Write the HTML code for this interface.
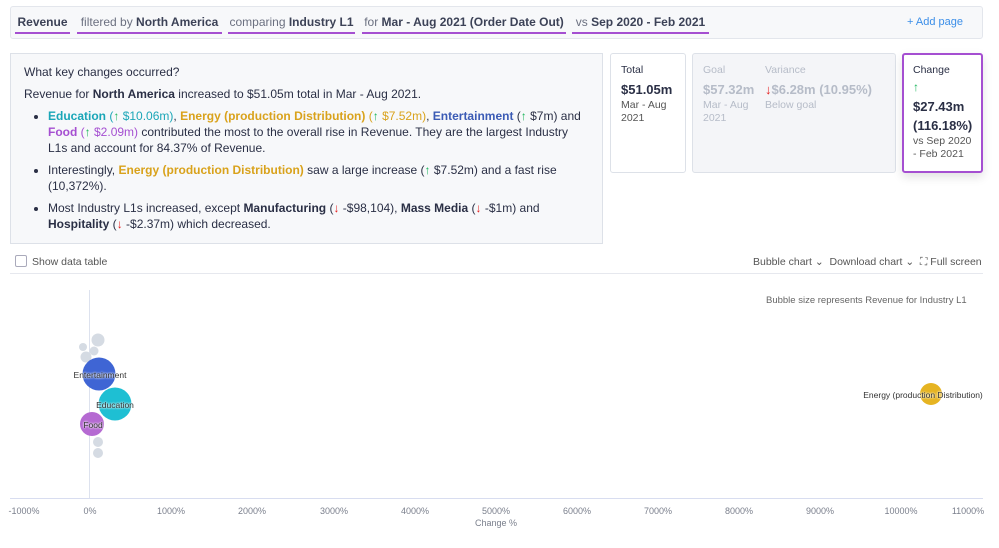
<!DOCTYPE html><html><head><style>
body{margin:0;width:999px;height:548px;background:#fff;font-family:"Liberation Sans",sans-serif;color:#2a2f45;position:relative;overflow:hidden}
.a{position:absolute}
.tb{left:10px;top:6px;width:973px;height:33px;border:1px solid #e3e6ec;background:#f7f8fa;border-radius:3px;box-sizing:border-box}
.tab{top:15px;height:17px;font-size:12px;color:#6b7080;border-bottom:2px solid #a54fd1;white-space:nowrap;text-align:center;overflow:hidden}
.tab b{color:#3c4257}
.ins{left:10px;top:53px;width:593px;height:191px;border:1px solid #dde1e8;background:#f7f8fa;box-sizing:border-box;font-size:12px;line-height:16px}
.ins ul{margin:0;padding-left:24px;padding-right:20px}.ins li{margin-bottom:6px}
.card{border:1px solid #dde1e8;border-radius:3px;box-sizing:border-box;font-size:10.5px;line-height:13px;padding:10px}
.up{color:#1bb55c;font-weight:bold}.dn{color:#e52020;font-weight:bold}
.t{color:#1aa6b7}.o{color:#d9a21b}.bl{color:#3b5bb5}.p{color:#a54fd1}
.tick{top:506px;font-size:9px;color:#7a7f8c;transform:translateX(-50%)}
.bub{border-radius:50%;transform:translate(-50%,-50%)}
.lb{font-size:8.5px;color:#333;transform:translate(-50%,-50%);text-shadow:0 0 2px #fff,0 0 2px #fff}
</style></head><body>
<div class="a tb"></div>
<div class="a tab" style="left:15px;width:55px"><b>Revenue</b></div>
<div class="a tab" style="left:77px;width:145px">filtered by <b>North America</b></div>
<div class="a tab" style="left:228px;width:127px">comparing <b>Industry L1</b></div>
<div class="a tab" style="left:362px;width:204px">for <b>Mar - Aug 2021 (Order Date Out)</b></div>
<div class="a tab" style="left:572px;width:137px">vs <b>Sep 2020 - Feb 2021</b></div>
<div class="a" style="left:907px;top:16px;font-size:11px;color:#3b8ee8">+ Add page</div>
<div class="a ins"><div style="padding:10px 0 0 13px">
<div style="margin-bottom:6px">What key changes occurred?</div>
<div style="margin-bottom:6px">Revenue for <b>North America</b> increased to $51.05m total in Mar - Aug 2021.</div>
<ul><li><b class="t">Education</b> <span class="t">(<span class="up">↑</span> $10.06m)</span>, <b class="o">Energy (production Distribution)</b> <span class="o">(<span class="up">↑</span> $7.52m)</span>, <b class="bl">Entertainment</b> (<span class="up">↑</span> $7m) and <b class="p">Food</b> <span class="p">(<span class="up">↑</span> $2.09m)</span> contributed the most to the overall rise in Revenue. They are the largest Industry L1s and account for 84.37% of Revenue.</li>
<li>Interestingly, <b class="o">Energy (production Distribution)</b> saw a large increase (<span class="up">↑</span> $7.52m) and a fast rise (10,372%).</li>
<li>Most Industry L1s increased, except <b>Manufacturing</b> (<span class="dn">↓</span> -$98,104), <b>Mass Media</b> (<span class="dn">↓</span> -$1m) and <b>Hospitality</b> (<span class="dn">↓</span> -$2.37m) which decreased.</li></ul></div></div>
<div class="a card" style="left:610px;top:53px;width:76px;height:120px">Total<div style="font-size:13px;font-weight:bold;margin:6px 0 3px">$51.05m</div><span style="color:#555">Mar - Aug 2021</span></div>
<div class="a card" style="left:692px;top:53px;width:204px;height:120px;background:#f4f5f8;color:#b6bcc8"><div class="a" style="left:10px;top:10px">Goal<div style="font-size:13px;font-weight:bold;margin:6px 0 3px">$57.32m</div>Mar - Aug<br>2021</div><div class="a" style="left:72px;top:10px;white-space:nowrap">Variance<div style="font-size:13px;font-weight:bold;margin:6px 0 3px"><span class="dn">↓</span>$6.28m (10.95%)</div>Below goal</div></div>
<div class="a card" style="left:902px;top:53px;width:81px;height:120px;border:2px solid #a54fd1;box-shadow:0 4px 10px rgba(0,0,0,.12);padding:9px">Change<div class="up" style="font-size:12px;margin:4px 0 3px">↑</div><div style="font-size:13px;font-weight:bold;line-height:19px;white-space:nowrap">$27.43m<br>(116.18%)</div><span style="color:#555">vs Sep 2020<br>- Feb 2021</span></div>
<div class="a" style="left:15px;top:255px;width:10px;height:10px;border:1px solid #aab;border-radius:2px"></div>
<div class="a" style="left:32px;top:256px;font-size:10.5px;color:#555">Show data table</div>
<div class="a" style="left:753px;top:256px;font-size:10.5px;color:#555;white-space:nowrap">Bubble chart ⌄ &nbsp;Download chart ⌄ &nbsp;⛶ Full screen</div>
<div class="a" style="left:10px;top:273px;width:973px;height:1px;background:#e6e8ee"></div>
<div class="a" style="left:766px;top:295px;font-size:9.5px;color:#666">Bubble size represents Revenue for Industry L1</div>
<div class="a" style="left:89px;top:290px;width:1px;height:209px;background:#dde2ee"></div>
<div class="a" style="left:10px;top:498px;width:973px;height:1px;background:#d8ddf0"></div>
<div class="a tick" style="left:24px">-1000%</div><div class="a tick" style="left:90px">0%</div><div class="a tick" style="left:171px">1000%</div><div class="a tick" style="left:252px">2000%</div><div class="a tick" style="left:334px">3000%</div><div class="a tick" style="left:415px">4000%</div><div class="a tick" style="left:496px">5000%</div><div class="a tick" style="left:577px">6000%</div><div class="a tick" style="left:658px">7000%</div><div class="a tick" style="left:739px">8000%</div><div class="a tick" style="left:820px">9000%</div><div class="a tick" style="left:901px">10000%</div><div class="a tick" style="left:968px">11000%</div>
<div class="a tick" style="left:496px;top:518px">Change %</div>
<div class="a bub" style="left:98px;top:340px;width:13px;height:13px;background:#d5dbe3"></div>
<div class="a bub" style="left:83px;top:347px;width:8px;height:8px;background:#d5dbe3"></div>
<div class="a bub" style="left:94px;top:351px;width:9px;height:9px;background:#d5dbe3"></div>
<div class="a bub" style="left:86px;top:357px;width:11px;height:11px;background:#d5dbe3"></div>
<div class="a bub" style="left:98px;top:442px;width:10px;height:10px;background:#d5dbe3"></div>
<div class="a bub" style="left:98px;top:453px;width:10px;height:10px;background:#d5dbe3"></div>
<div class="a bub" style="left:99px;top:374px;width:33px;height:33px;background:#3f65d4"></div>
<div class="a bub" style="left:115px;top:404px;width:33px;height:33px;background:#1ebfd3"></div>
<div class="a bub" style="left:92px;top:424px;width:24px;height:24px;background:#b56ad2"></div>
<div class="a bub" style="left:931px;top:394px;width:22px;height:22px;background:#e6b422"></div>
<div class="a lb" style="left:100px;top:375px">Entertainment</div>
<div class="a lb" style="left:115px;top:405px">Education</div>
<div class="a lb" style="left:93px;top:425px">Food</div>
<div class="a lb" style="left:923px;top:395px;white-space:nowrap">Energy (production Distribution)</div>
</body></html>
